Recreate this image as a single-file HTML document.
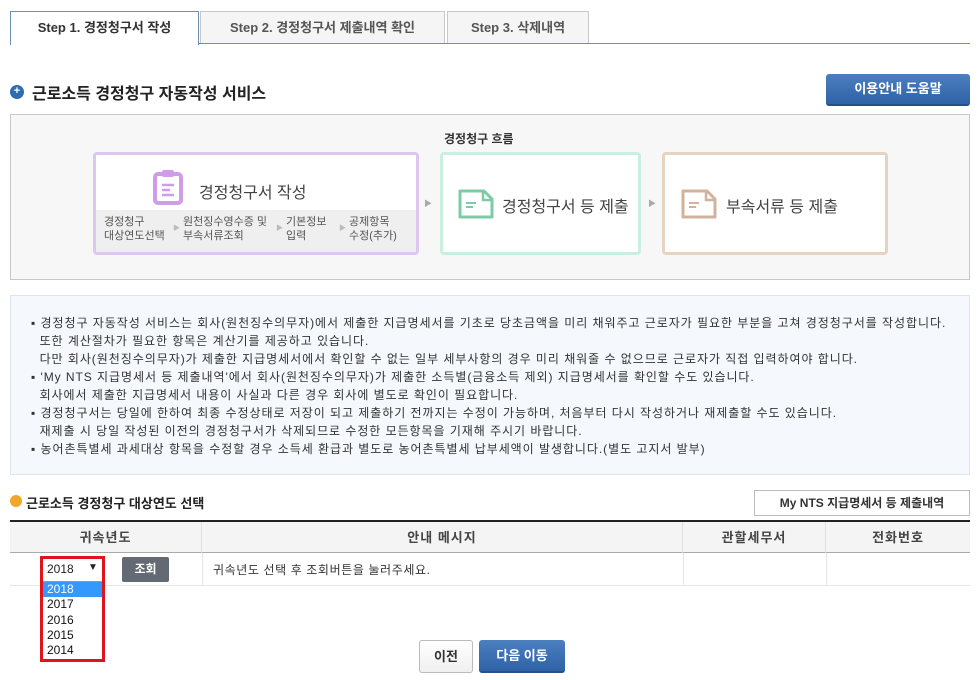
<!DOCTYPE html>
<html><head><meta charset="utf-8">
<style>
*{margin:0;padding:0;box-sizing:border-box}
body{width:980px;height:680px;background:#fff;font-family:"Liberation Sans","Noto Sans CJK KR",sans-serif;color:#333;position:relative;overflow:hidden;font-size:12px}
.a{position:absolute}
.tab{position:absolute;top:11px;height:33px;border:1px solid #c8c8c8;border-bottom:none;background:#f5f5f5;font-size:13px;font-weight:bold;color:#555;text-align:center;line-height:31px}
.tab.on{background:#fff;border-color:#6d8fb5;color:#333;height:34px;z-index:2}
.box{position:absolute;background:#fff;border-radius:4px;border:3px solid}
.fl{font-size:16px;color:#444;white-space:nowrap}
.info p{white-space:nowrap;font-size:12px;line-height:18px;color:#333;letter-spacing:0.95px}
.th{position:absolute;top:522px;height:31px;line-height:31px;text-align:center;font-weight:bold;font-size:13px;color:#444;border-right:1px solid #e0e0e0;letter-spacing:1px}
</style></head><body>
<div class="tab on" style="left:10px;width:189px">Step 1. 경정청구서 작성</div>
<div class="tab" style="left:200px;width:245px">Step 2. 경정청구서 제출내역 확인</div>
<div class="tab" style="left:447px;width:142px">Step 3. 삭제내역</div>
<div class="a" style="left:10px;top:43px;width:960px;height:1px;background:#6d8fb5"></div>

<div class="a" style="left:10px;top:85px;width:14px;height:14px;border-radius:50%;background:#2d6db0;color:#fff;font-size:11px;line-height:13px;text-align:center;font-weight:bold">+</div>
<div class="a" style="left:32px;top:80px;font-size:16px;font-weight:bold;color:#222">근로소득 경정청구 자동작성 서비스</div>
<div class="a" style="left:826px;top:74px;width:144px;height:32px;border-radius:3px;background:linear-gradient(#4b7fc0,#2f62a6);border-bottom:2px solid #254f88;color:#fff;font-weight:bold;font-size:13px;text-align:center;line-height:30px">이용안내 도움말</div>

<div class="a" style="left:10px;top:114px;width:960px;height:166px;background:#f7f7f7;border:1px solid #c8c8c8"></div>
<div class="a" style="left:444px;top:130px;font-size:12px;font-weight:bold;color:#333">경정청구 흐름</div>
<div class="box" style="left:93px;top:152px;width:326px;height:103px;border-color:#dcc7ef;overflow:hidden">
  <svg class="a" style="left:56px;top:14px" width="32" height="36" viewBox="0 0 32 36"><rect x="3" y="5" width="26" height="29" rx="3" fill="none" stroke="#cf9de8" stroke-width="4"/><rect x="10" y="1" width="12" height="7" rx="2" fill="#cf9de8"/><path d="M10 16h12M10 21h8M10 26h12" stroke="#cf9de8" stroke-width="2.5"/></svg>
  <div class="a fl" style="left:103px;top:24px">경정청구서 작성</div>
  <div class="a" style="left:0;top:55px;width:320px;height:43px;background:#efefef;font-size:11px;color:#555;line-height:14px">
    <div class="a" style="left:8px;top:5px">경정청구<br>대상연도선택</div>
    <div class="a" style="left:87px;top:5px">원천징수영수증 및<br>부속서류조회</div>
    <div class="a" style="left:190px;top:5px">기본정보<br>입력</div>
    <div class="a" style="left:253px;top:5px">공제항목<br>수정(추가)</div>
    <div class="a" style="left:77px;top:12px;color:#bbb;font-size:7px">▶</div>
    <div class="a" style="left:180px;top:12px;color:#bbb;font-size:7px">▶</div>
    <div class="a" style="left:243px;top:12px;color:#bbb;font-size:7px">▶</div>
  </div>
</div>
<div class="a" style="left:424px;top:198px;color:#aaa;font-size:8px">▶</div>
<div class="box" style="left:440px;top:152px;width:201px;height:103px;border-color:#c9efdf">
  <svg class="a" style="left:14px;top:33px" width="38" height="32" viewBox="0 0 38 32"><path d="M3 3h24l8 8v18H3z" fill="none" stroke="#7ccba6" stroke-width="3" stroke-linejoin="round"/><path d="M26 3v9h9" fill="none" stroke="#7ccba6" stroke-width="2.5"/><path d="M9 15h10M9 19h7" stroke="#7ccba6" stroke-width="2"/></svg>
  <div class="a fl" style="left:59px;top:38px">경정청구서 등 제출</div>
</div>
<div class="a" style="left:648px;top:198px;color:#aaa;font-size:8px">▶</div>
<div class="box" style="left:662px;top:152px;width:226px;height:103px;border-color:#e6d4c3">
  <svg class="a" style="left:15px;top:33px" width="38" height="32" viewBox="0 0 38 32"><path d="M3 3h24l8 8v18H3z" fill="none" stroke="#cfb39d" stroke-width="3" stroke-linejoin="round"/><path d="M26 3v9h9" fill="none" stroke="#cfb39d" stroke-width="2.5"/><path d="M9 15h10M9 19h7" stroke="#cfb39d" stroke-width="2"/></svg>
  <div class="a fl" style="left:61px;top:38px">부속서류 등 제출</div>
</div>

<div class="a info" style="left:10px;top:295px;width:960px;height:180px;background:#f5f8fc;border:1px solid #dfe5ee;padding:18px 0 0 20px">
<p>▪ 경정청구 자동작성 서비스는 회사(원천징수의무자)에서 제출한 지급명세서를 기초로 당초금액을 미리 채워주고 근로자가 필요한 부분을 고쳐 경정청구서를 작성합니다.</p>
<p>&nbsp;&nbsp;또한 계산절차가 필요한 항목은 계산기를 제공하고 있습니다.</p>
<p>&nbsp;&nbsp;다만 회사(원천징수의무자)가 제출한 지급명세서에서 확인할 수 없는 일부 세부사항의 경우 미리 채워줄 수 없으므로 근로자가 직접 입력하여야 합니다.</p>
<p>▪ 'My NTS 지급명세서 등 제출내역'에서 회사(원천징수의무자)가 제출한 소득별(금융소득 제외) 지급명세서를 확인할 수도 있습니다.</p>
<p>&nbsp;&nbsp;회사에서 제출한 지급명세서 내용이 사실과 다른 경우 회사에 별도로 확인이 필요합니다.</p>
<p>▪ 경정청구서는 당일에 한하여 최종 수정상태로 저장이 되고 제출하기 전까지는 수정이 가능하며, 처음부터 다시 작성하거나 재제출할 수도 있습니다.</p>
<p>&nbsp;&nbsp;재제출 시 당일 작성된 이전의 경정청구서가 삭제되므로 수정한 모든항목을 기재해 주시기 바랍니다.</p>
<p>▪ 농어촌특별세 과세대상 항목을 수정할 경우 소득세 환급과 별도로 농어촌특별세 납부세액이 발생합니다.(별도 고지서 발부)</p>
</div>

<div class="a" style="left:10px;top:495px;width:12px;height:12px;border-radius:50%;background:#f0a52b"></div>
<div class="a" style="left:26px;top:493px;font-size:13px;font-weight:bold;color:#222">근로소득 경정청구 대상연도 선택</div>
<div class="a" style="left:754px;top:490px;width:216px;height:26px;border:1px solid #bbb;background:#fff;font-size:12px;font-weight:bold;color:#333;text-align:center;line-height:24px">My NTS 지급명세서 등 제출내역</div>

<div class="a" style="left:10px;top:520px;width:960px;height:2px;background:#222"></div>
<div class="a" style="left:10px;top:522px;width:960px;height:31px;background:#f4f4f4;border-bottom:1px solid #aaa"></div>
<div class="th" style="left:10px;width:192px">귀속년도</div>
<div class="th" style="left:202px;width:481px">안내 메시지</div>
<div class="th" style="left:683px;width:143px">관할세무서</div>
<div class="th" style="left:826px;width:144px;border:none">전화번호</div>
<div class="a" style="left:202px;top:553px;width:1px;height:32px;background:#e6e6e6"></div>
<div class="a" style="left:683px;top:553px;width:1px;height:32px;background:#e6e6e6"></div>
<div class="a" style="left:826px;top:553px;width:1px;height:32px;background:#e6e6e6"></div>
<div class="a" style="left:10px;top:585px;width:960px;height:1px;background:#e6e6e6"></div>
<div class="a" style="left:213px;top:561px;font-size:12px;color:#333;letter-spacing:0.6px">귀속년도 선택 후 조회버튼을 눌러주세요.</div>

<div class="a" style="left:40px;top:556px;width:65px;height:106px;border:3px solid #e0141e;background:#fff"></div>
<div class="a" style="left:47px;top:562px;font-size:12px;color:#222">2018</div>
<div class="a" style="left:88px;top:562px;font-size:10px;color:#222">▼</div>
<div class="a" style="left:43px;top:581px;width:59px;height:1px;background:#999"></div>
<div class="a" style="left:43px;top:582px;width:59px;height:15px;background:#3399ff"></div>
<div class="a" style="left:47px;top:582px;font-size:12px;line-height:15.3px;color:#fff">2018<br><span style="color:#111">2017<br>2016<br>2015<br>2014</span></div>
<div class="a" style="left:122px;top:557px;width:47px;height:25px;border-radius:2px;background:#646a73;color:#fff;font-weight:bold;font-size:12px;text-align:center;line-height:25px">조회</div>

<div class="a" style="left:419px;top:640px;width:54px;height:33px;border:1px solid #bbb;border-radius:3px;background:linear-gradient(#fff,#f0f0f0);font-weight:bold;font-size:13px;text-align:center;line-height:31px;color:#333">이전</div>
<div class="a" style="left:479px;top:640px;width:86px;height:33px;border-radius:3px;background:linear-gradient(#4b7fc0,#2f62a6);border-bottom:2px solid #254f88;color:#fff;font-weight:bold;font-size:13px;text-align:center;line-height:31px">다음 이동</div>
</body></html>
